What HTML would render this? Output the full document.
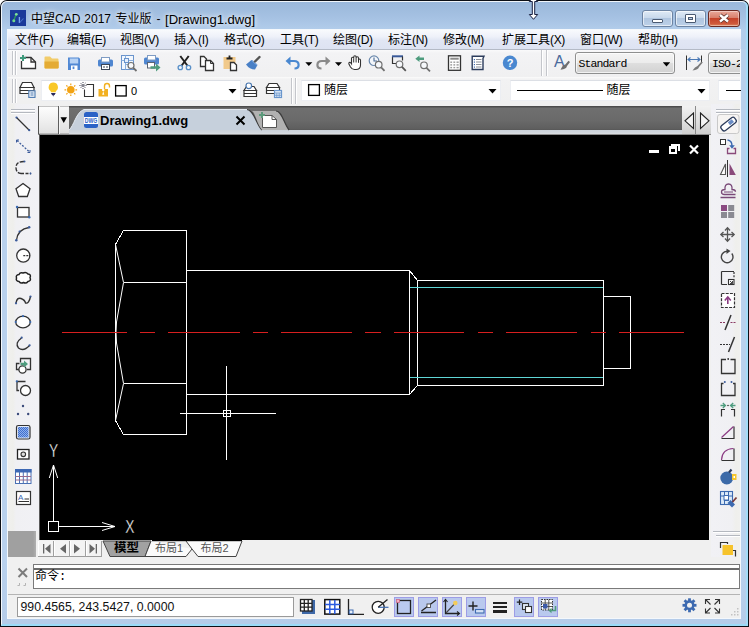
<!DOCTYPE html>
<html lang="zh-CN">
<head>
<meta charset="utf-8">
<title>中望CAD 2017 专业版 - [Drawing1.dwg]</title>
<style>
html,body{margin:0;padding:0;background:#fff;}
body{width:749px;height:627px;overflow:hidden;position:relative;font-family:"Liberation Sans","Noto Sans CJK SC",sans-serif;font-size:12px;color:#000;}
div,span{box-sizing:border-box;}
.a{position:absolute;}
#win{position:absolute;left:0;top:0;width:749px;height:627px;border-radius:7px 7px 0 0;background:#0c0f16;overflow:hidden;}
#frame{position:absolute;left:1px;top:1px;width:747px;height:625px;border-radius:6px 6px 0 0;background:linear-gradient(180deg,#9ab8db 0,#9fbcde 8px,#a6c2e3 17px,#b2cdeb 29px,#b9d1ed 100px,#b9d1ed 560px,#b5cce9 622px);}
#frame:before{content:"";position:absolute;left:0;top:0;right:0;bottom:0;border:1px solid rgba(255,255,255,.85);border-right:2px solid #a3dcf8;border-bottom:2px solid #9bdbf8;border-radius:6px 6px 0 0;}
#inner{left:7px;top:29px;width:734px;height:590px;background:#f4f8fc;}
#title span{position:absolute;top:11px;height:17px;line-height:17px;font-size:12px;white-space:nowrap;color:#000;text-shadow:0 0 7px rgba(255,255,255,.9),0 0 4px rgba(255,255,255,.7);}
#menubar{left:8px;top:30px;width:733px;height:19px;background:linear-gradient(180deg,#f8fafd 0,#eef1f9 35%,#e1e6f4 55%,#dde3f2 100%);}
#menubar span{position:absolute;top:0;height:19px;line-height:20px;font-size:12px;white-space:nowrap;}
#menubar b{font-weight:normal;letter-spacing:-0.35px;}
#tb1{left:8px;top:49px;width:732px;height:28px;background:linear-gradient(180deg,#fafafb 0,#f3f3f5 3px,#f0f0f1 100%);border-top:1px solid #b4bac6;}
#tb2{left:8px;top:77px;width:732px;height:29px;background:linear-gradient(180deg,#fbfbfb 0,#f2f2f3 2px,#f0f0f0 26px,#f0f0f0 27px,#fdfdfd 28px);}
#client{left:8px;top:104px;width:732px;height:514px;background:#f0f0f0;}
#leftbar{left:8px;top:104px;width:31px;height:427px;background:linear-gradient(90deg,#f0f0ee 0,#efefec 5px,#f0f0f3 8px,#f1f1f5 100%);}
#leftgray{left:8px;top:531px;width:28px;height:26px;background:#a0a0a0;}
#rightbar{left:711px;top:104px;width:29px;height:453px;background:linear-gradient(90deg,#f1f1f5 0,#f0f0f3 21px,#efefec 25px,#f0f0ee 100%);}
#tabbar{left:38px;top:106px;width:673px;height:28px;background:linear-gradient(180deg,#4c4c4c 0,#4c4c4c 1px,#6f6f6f 2px,#6a6a6a 14px,#5e5e5e 23px,#555 24px);}
#tabstrip{left:38px;top:130px;width:673px;height:5px;background:linear-gradient(180deg,#cbd2da 0,#d3d8de 3px,#dde0e4 4px,#8e8e8e 4px);}
#canvas{left:40px;top:135px;width:669px;height:405px;background:#000;}
#layouts{left:38px;top:540px;width:673px;height:17px;background:#f0f0f0;}
#cmd{left:8px;top:557px;width:732px;height:37px;background:#f0f0f0;}
#status{left:8px;top:594px;width:732px;height:24px;background:#f0f0f0;border-top:1px solid #b4b4b4;}
.combo{position:absolute;background:#fff;border:1px solid #eceef2;border-top-color:#dcdfe5;}
.btncombo{position:absolute;border:1px solid #8e8f8f;border-radius:3px;background:linear-gradient(180deg,#f4f4f4 0,#ececec 48%,#dedede 52%,#d2d2d2 100%);box-shadow:inset 0 0 0 1px rgba(255,255,255,.7);font-family:"Liberation Mono","Noto Sans CJK SC",monospace;font-size:11px;white-space:nowrap;overflow:hidden;}
.cjk{font-family:"Liberation Sans","Noto Sans CJK SC",sans-serif;}
</style>
</head>
<body>
<div id="win">
<div id="frame"></div>
<div id="inner" class="a"></div>
<div id="title"><span style="left:31px">中望CAD</span><span style="left:84.3px">2017</span><span style="left:115.5px">专业版</span><span style="left:156.5px">-</span><span style="left:165px;font-size:13.1px">[Drawing1.dwg]</span></div>
<div id="menubar" class="a">
<span style="left:7px">文件<b>(F)</b></span>
<span style="left:59px">编辑<b>(E)</b></span>
<span style="left:112px">视图<b>(V)</b></span>
<span style="left:166px">插入<b>(I)</b></span>
<span style="left:216px">格式<b>(O)</b></span>
<span style="left:272px">工具<b>(T)</b></span>
<span style="left:325px">绘图<b>(D)</b></span>
<span style="left:380px">标注<b>(N)</b></span>
<span style="left:435px">修改<b>(M)</b></span>
<span style="left:494px">扩展工具<b>(X)</b></span>
<span style="left:572px">窗口<b>(W)</b></span>
<span style="left:630px">帮助<b>(H)</b></span>
</div>
<div id="tb1" class="a"></div>
<div id="tb2" class="a"></div>
<div id="client" class="a"></div>
<div id="leftbar" class="a"></div>
<div id="leftgray" class="a"></div>
<div id="rightbar" class="a"></div>
<div id="tabbar" class="a"></div>
<div id="tabstrip" class="a"></div>
<div id="canvas" class="a"></div>
<div id="layouts" class="a"></div>
<div id="cmd" class="a"></div>
<div id="status" class="a"></div>
<!-- window buttons -->
<div class="a" style="left:642px;top:10px;width:31px;height:17px;border:1px solid #6d84a3;border-radius:3px;background:linear-gradient(180deg,#dfeaf6 0,#c9d9ec 45%,#b0c6e0 50%,#bcd0e8 100%);box-shadow:inset 0 0 0 1px rgba(255,255,255,.6);"></div>
<div class="a" style="left:675px;top:10px;width:31px;height:17px;border:1px solid #6d84a3;border-radius:3px;background:linear-gradient(180deg,#dfeaf6 0,#c9d9ec 45%,#b0c6e0 50%,#bcd0e8 100%);box-shadow:inset 0 0 0 1px rgba(255,255,255,.6);"></div>
<div class="a" style="left:708px;top:10px;width:32px;height:17px;border:1px solid #6b2a22;border-radius:3px;background:linear-gradient(180deg,#e9a99b 0,#d9806c 45%,#c5432a 50%,#cf5a3c 85%,#e08a60 100%);box-shadow:inset 0 0 0 1px rgba(255,255,255,.4);"></div>

<!-- layer combo -->
<div class="combo" style="left:41px;top:80px;width:200px;height:21px;"></div>
<div class="a" style="left:131px;top:84px;height:15px;line-height:15px;font-size:11px;">0</div>
<!-- color combo -->
<div class="combo" style="left:301px;top:80px;width:200px;height:21px;"></div>
<div class="a" style="left:324px;top:82px;height:16px;line-height:16px;font-size:12px;">随层</div>
<!-- linetype combo -->
<div class="combo" style="left:510px;top:80px;width:200px;height:21px;"></div>
<div class="a" style="left:606.5px;top:82px;height:16px;line-height:16px;font-size:12px;">随层</div>
<!-- lineweight combo (clipped) -->
<div class="combo" style="left:718px;top:80px;width:40px;height:21px;"></div>

<!-- text style / dim style combos -->
<div class="btncombo" style="left:575px;top:52px;width:100px;height:22px;line-height:22px;padding-left:2.500px;font-size:11.500px;letter-spacing:-0.900px;">Standard</div>
<div class="btncombo" style="left:708px;top:52px;width:60px;height:22px;line-height:22px;padding-left:3px;font-size:11.500px;letter-spacing:-0.900px;">ISO-25</div>

<div class="a" style="left:740px;top:49px;width:1px;height:60px;background:#f4f8fc"></div><div class="a" style="left:741px;top:49px;width:5px;height:60px;background:#b8d0ec"></div><div class="a" style="left:746px;top:49px;width:2px;height:60px;background:#a3dcf8"></div><div class="a" style="left:748px;top:49px;width:1px;height:60px;background:#0c0f16"></div>
<!-- doc tab bar widgets -->
<div class="a" style="left:38px;top:106px;width:21px;height:28px;background:linear-gradient(180deg,#8a8a8a 0,#fdfdfd 1px,#f0f0f0 50%,#e2e2e2 96%,#9a9a9a 100%);border-right:1px solid #5e5e5e;border-left:1px solid #555;"></div>
<div class="a" style="left:59px;top:106px;width:10px;height:28px;background:linear-gradient(180deg,#8a8a8a 0,#f8f8f8 1px,#ececec 50%,#e0e0e0 96%,#9a9a9a 100%);border-left:1px solid #f4f4f4;"></div>
<div class="a" style="left:682px;top:106px;width:14px;height:28px;background:linear-gradient(180deg,#f2f2f2 0,#dedede 60%,#cfcfcf 100%);border-right:1px solid #8a8a8a;"></div>
<div class="a" style="left:696px;top:106px;width:15px;height:28px;background:linear-gradient(180deg,#f2f2f2 0,#dedede 60%,#cfcfcf 100%);"></div>
<div class="a" style="left:100px;top:112px;height:17px;line-height:17px;font-size:13px;font-weight:bold;white-space:nowrap;z-index:5;">Drawing1.dwg</div>

<!-- layout tabs text -->
<div class="a" style="left:114px;top:541px;height:15px;line-height:15px;font-size:12.5px;font-weight:bold;z-index:5;">模型</div>
<div class="a" style="left:155px;top:541px;height:15px;line-height:15px;font-size:11px;color:#555;z-index:5;white-space:nowrap;">布局1</div>
<div class="a" style="left:200.5px;top:541px;height:15px;line-height:15px;font-size:11px;color:#555;z-index:5;white-space:nowrap;">布局2</div>

<!-- command line -->
<div class="a" style="left:33px;top:564px;width:707px;height:25px;background:#fff;border:1px solid #7a7a7a;"></div>
<div class="a" style="left:34px;top:568px;width:705px;height:2px;background:#6b6b6b;"></div>
<div class="a" style="left:35px;top:570px;height:14px;line-height:14px;font-size:12px;white-space:nowrap;font-family:'Liberation Mono','Noto Sans CJK SC',monospace;">命令:</div>

<!-- status coords -->
<div class="a" style="left:17px;top:597px;width:277px;height:20px;background:#fff;border:1px solid #9a9a9a;"></div>
<div class="a" style="left:20.5px;top:598px;height:18px;line-height:18px;font-size:12.3px;white-space:nowrap;color:#111;">990.4565, 243.5427, 0.0000</div>
<div class="a" style="left:39px;top:134px;width:1px;height:406px;background:#5a5a5a"></div>
<div class="a" style="left:33px;top:531px;width:3px;height:26px;background:linear-gradient(90deg,#a0a0a0,#b0b0b0)"></div>
<svg class="a" style="left:0;top:0;z-index:4" width="749" height="627" viewBox="0 0 749 627" fill="none" stroke-linecap="butt">
<!-- CAD drawing -->
<g stroke="#fff" stroke-width="1" shape-rendering="crispEdges" fill="none">
<path d="M123.5 230.5H186.5V434.5H123.5L115.5 420.5V244.5Z"/>
<path d="M123.5 282.5H186.5M123.5 383.5H186.5"/>
<path d="M186.5 270.5H409.5V394.5H186.5"/>
<path d="M409.5 270.5L417.5 280.5M409.5 394.5L417.5 385.5"/>
<path d="M417.5 280.5H603.5V385.5H417.5Z"/>
<path d="M603.5 296.5H630.5V368.5H603.5"/>
</g>
<g stroke="#fff" stroke-width="1" fill="none">
<path d="M115.5 244.5L123.5 282.5L116.5 322 116 332 116.5 343 123.5 383.5 115.5 420.5"/>
</g>
<g stroke="#5fd6d6" stroke-width="1" shape-rendering="crispEdges">
<path d="M410 287.5H603M410 377.5H603"/>
</g>
<g stroke="#d61f1f" stroke-width="1" shape-rendering="crispEdges">
<path d="M62 332.5H126.5M139.5 332.5H154.5M167.5 332.5H239.5M252.5 332.5H267.5M280.5 332.5H351.5M365 332.5H380.5M393.5 332.5H464M477.5 332.5H493M506 332.5H577M590.5 332.5H606M619 332.5H684"/>
</g>
<!-- crosshair -->
<g stroke="#fff" stroke-width="1" shape-rendering="crispEdges">
<path d="M226.5 366V460M180 413.5H276M223.5 410.5H230.5V416.5H223.5Z"/>
</g>
<!-- UCS icon -->
<g stroke="#fff" stroke-width="1" shape-rendering="crispEdges"><path d="M48.5 521.5H58.5V531.5H48.5ZM53.5 521V465M58.5 526.5H115"/></g>
<g stroke="#fff" stroke-width="1"><path d="M49.3 478L53.5 465L57.7 478M102 522.5L115 526.5L102 530.5"/>
</g>
<g fill="#fff" stroke="#000" stroke-width="0.350" opacity="0.990" font-family="Liberation Sans, sans-serif" font-size="17.500">
<text x="53.500" y="456.800" text-anchor="middle" textLength="9.200" lengthAdjust="spacingAndGlyphs">Y</text>
<text x="129.800" y="532.800" text-anchor="middle" textLength="9.200" lengthAdjust="spacingAndGlyphs">X</text>
</g>
<!-- MDI child buttons -->
<g fill="#fff" stroke="none" shape-rendering="crispEdges">
<rect x="649" y="150" width="10" height="3"/>
<path d="M671 144H680V151H678V146H671Z"/>
<path fill-rule="evenodd" d="M669 146H677V154H669ZM671 149H675V152H671Z"/>
</g>
<g stroke="#fff" stroke-width="2.2"><path d="M690 145.5L698 153.5M698 145.5L690 153.5"/></g>
<!-- document tab -->
<path d="M69 130C74 126 76 112 84 109.5H247C254 110 256 124 262 130Z" fill="#c6d0dc" stroke="none"/>
<path d="M69 130C74 126 76 112 84 109.5H247" stroke="#e4eaf1" stroke-width="1"/>
<path d="M247 109.5C254 110 256 124 262 130" stroke="#3c3c3c" stroke-width="1.2"/>
<!-- new tab mini -->
<path d="M252 111C254 111 257 111 260 111H276C282 111 284 124 289 130H262C257 124 255 112 252 111Z" fill="#b1b1b1"/>
<path d="M276 111C282 111 284 124 289 130" stroke="#3c3c3c" stroke-width="1.2"/>
<path d="M262.5 115.5H272L276.5 119.5V127.5H262.5Z" fill="#fff" stroke="#555" stroke-width="1"/>
<path d="M272 115.5V119.5H276.5" stroke="#555" stroke-width="1"/>
<path d="M262 112V118M259 115H265" stroke="#5c9a7c" stroke-width="2"/>
<!-- dropdown arrow -->
<path d="M60.500 117.300H67L63.750 123Z" fill="#000"/>
<!-- tab close X -->
<path d="M236.5 116.5L244.5 124.5M244.5 116.5L236.5 124.5" stroke="#000" stroke-width="2"/>
<!-- DWG icon -->
<rect x="84" y="112" width="14" height="16" rx="2.5" fill="#2a62c6"/>
<rect x="84" y="117" width="14" height="7" fill="#fff"/>
<text x="91" y="123.300" font-family="Liberation Sans, sans-serif" font-size="7" font-weight="bold" fill="#2a62c6" text-anchor="middle" stroke="none" textLength="12.500" lengthAdjust="spacingAndGlyphs">DWG</text>
<!-- tab nav arrows -->
<path d="M693.500 113V128.500L685 120.800Z" stroke="#222" stroke-width="1.100" fill="#f4f4f4"/>
<path d="M700.500 113V128.500L709 120.800Z" stroke="#222" stroke-width="1.100" fill="#f4f4f4"/>
<!-- layout nav -->
<g shape-rendering="crispEdges">
<rect x="38" y="541" width="64" height="15" fill="#f3f3f3" stroke="none"/>
<path d="M38 556.500H102" stroke="#9c9c9c"/>
<path d="M53.500 541V557M69.500 541V557M85.500 541V557M101.500 541V557" stroke="#a0a0a0"/>
<path d="M54.500 541V556M70.500 541V556M86.500 541V556M38.500 541V556" stroke="#fff"/>
</g>
<g fill="#666" stroke="none">
<rect x="43" y="544" width="1.300" height="9.500"/><path d="M50.500 544V553.500L45 548.800Z"/>
<path d="M66 544V553.500L60 548.800Z"/>
<path d="M74 544V553.500L80 548.800Z"/>
<path d="M89.500 544V553.500L95 548.800Z"/><rect x="95.700" y="544" width="1.300" height="9.500"/>
</g>
<!-- layout tabs -->
<path d="M103 541H151L145 556.5H110Z" fill="#a2a2a2" stroke="#444" stroke-width="1"/>
<path d="M151 541L145 556.5H186L192 549" stroke="#444" stroke-width="1" fill="#fbfbfb"/>
<path d="M186 541L192 549L198 556.5H236L242 541" stroke="#444" stroke-width="1" fill="#fbfbfb"/>
<rect x="152" y="540" width="90" height="1.2" fill="#000"/>
<!-- toolbar grips -->
<g shape-rendering="crispEdges" stroke="none">
<rect x="12" y="51" width="1" height="24" fill="#c4c6cb"/><rect x="13" y="51" width="1" height="24" fill="#fff"/>
<rect x="15" y="51" width="1" height="24" fill="#c4c6cb"/><rect x="16" y="51" width="1" height="24" fill="#fff"/>
<rect x="12" y="79" width="1" height="24" fill="#c4c6cb"/><rect x="13" y="79" width="1" height="24" fill="#fff"/>
<rect x="15" y="79" width="1" height="24" fill="#c4c6cb"/><rect x="16" y="79" width="1" height="24" fill="#fff"/>
<rect x="541" y="50" width="1" height="26" fill="#c4c6cb"/><rect x="542" y="50" width="1" height="26" fill="#fff"/>
<rect x="546" y="50" width="1" height="26" fill="#c4c6cb"/><rect x="547" y="50" width="1" height="26" fill="#fff"/>
<rect x="291" y="78" width="1" height="26" fill="#c4c6cb"/><rect x="292" y="78" width="1" height="26" fill="#fff"/>
<rect x="295" y="78" width="1" height="26" fill="#c4c6cb"/><rect x="296" y="78" width="1" height="26" fill="#fff"/>
</g>
<!-- title icon -->
<rect x="10" y="10" width="16" height="16" fill="#1b3a9a"/>
<path d="M13.700 20.800L16.200 14.200" stroke="#2f9a5a" stroke-width="1.300"/>
<circle cx="13.800" cy="20.700" r="1.500" fill="#6fd88a"/><circle cx="16.300" cy="14.300" r="1.400" fill="#7fe09a"/>
<path d="M19.400 17V23" stroke="#7aa8f0" stroke-width="1.300"/>
<path d="M19.800 22.500L23.500 18.500" stroke="#4a72c8" stroke-width="1.100"/>
<!-- new -->
<path d="M24.5 57.5H31L35.5 62V68.5H21.5V61" fill="#fff" stroke="#333" stroke-width="1.3"/>
<path d="M31 57.5V62H35.5" stroke="#333" stroke-width="1.3"/>
<path d="M23 55V61M20 58H26" stroke="#3f9a7c" stroke-width="2"/>
<!-- open -->
<path d="M44.5 57.5Q44.5 56.5 45.5 56.5H50L52 58.5H57.5Q58.5 58.5 58.5 59.5V67.500Q58.5 68.5 57.5 68.500H45.5Q44.5 68.5 44.5 67.5Z" fill="#f2cc6a"/>
<path d="M44.5 61.5H58.7V67.5Q58.7 68.5 57.700 68.500H45.500Q44.500 68.500 44.500 67.500Z" fill="#e4ab34"/>
<!-- save -->
<path d="M68 57.500H78.800L80 58.700V70H68Z" fill="#5088d4"/>
<rect x="69.800" y="58.500" width="8.400" height="5" fill="#b7d2f4"/>
<rect x="71" y="65.500" width="6.500" height="4.500" fill="#fff"/>
<rect x="72.600" y="66.500" width="1.800" height="2.600" fill="#5088d4"/>
<!-- print -->
<rect x="98" y="59.500" width="15" height="7" rx="1.500" fill="#4f86d0"/>
<rect x="101.500" y="57.500" width="8" height="4.500" fill="#fff" stroke="#7f9cc4" stroke-width="1"/>
<rect x="101.500" y="64.500" width="8" height="5" fill="#fff" stroke="#3b4657" stroke-width="1"/>
<rect x="103" y="66.500" width="2" height="1" fill="#3b4657"/><rect x="106" y="66.500" width="2" height="1" fill="#3b4657"/>
<!-- preview -->
<rect x="121.500" y="55.500" width="12" height="14" fill="#f3f8fe" stroke="#6a94cc" stroke-width="1"/>
<path d="M121.500 60.500H133.500M125.500 55.500V69.500M125.500 64.500H129" stroke="#8ab0de" stroke-width="1"/>
<rect x="124.500" y="58.500" width="4" height="4" fill="#e6f0fc" stroke="#6a94cc"/>
<circle cx="131" cy="65.500" r="3" fill="#f8fafd" stroke="#6e6e6e" stroke-width="1.200"/>
<path d="M133.300 67.800L136.500 71" stroke="#6e6e6e" stroke-width="1.800"/>
<!-- publish -->
<rect x="144" y="57.500" width="15" height="7" rx="1.500" fill="#4f86d0"/>
<rect x="147.500" y="55.500" width="8" height="4.500" fill="#fff" stroke="#7f9cc4" stroke-width="1"/>
<rect x="147.500" y="62.500" width="7" height="5.500" fill="#fff" stroke="#5a6474" stroke-width="1"/>
<path d="M150.500 66.300H156V63.500L160.500 67.500L156 71.500V68.700H150.500Z" fill="#4e9c7e"/>
<!-- cut -->
<path d="M180.300 56L187.300 65.500M188.700 56L181.700 65.500" stroke="#222" stroke-width="2"/>
<circle cx="180.300" cy="67.500" r="2.200" stroke="#5a90c8" stroke-width="1.300" fill="#eef4fb"/>
<circle cx="188.500" cy="67.500" r="2.200" stroke="#5a90c8" stroke-width="1.300" fill="#eef4fb"/>
<!-- copy -->
<path d="M200.500 56.500H204L206.500 59V66.500H200.500Z" fill="#fff" stroke="#333" stroke-width="1.300"/>
<path d="M205.500 60.500H210.500L213.500 63.500V70.500H205.500Z" fill="#fff" stroke="#333" stroke-width="1.300"/>
<path d="M210.500 60.500V63.500H213.500" stroke="#333" stroke-width="1"/>
<!-- paste -->
<rect x="223.500" y="57" width="12" height="12" fill="#f1c98a"/>
<path d="M226.500 58.500H232.500M229.500 55.500V58" stroke="#222" stroke-width="1.800"/>
<path d="M230.500 62.500H234L236.500 65V70.500H230.500Z" fill="#fff" stroke="#333" stroke-width="1.300"/>
<!-- match -->
<path d="M246 64.500L251.500 60L257.500 65L255 69.500Q249.500 69.500 246 64.500Z" fill="#4a80c6"/>
<path d="M252 60.500L257 65" stroke="#7aa4da" stroke-width="1.200"/>
<path d="M255 61.500L259.500 57" stroke="#555" stroke-width="2.400" stroke-linecap="round"/>
<!-- undo -->
<path d="M288 61H294Q298.600 61 298.600 65Q298.600 68.500 294.500 68.500" stroke="#4a88d0" stroke-width="2.200"/>
<path d="M285.500 61L290.500 56.500V65.500Z" fill="#4a88d0"/>
<path d="M305.300 62.300H312.300L308.800 66Z" fill="#000"/>
<!-- redo -->
<path d="M328 61H322Q317.400 61 317.400 65Q317.400 68.500 321.500 68.500" stroke="#8a8a8a" stroke-width="2.200"/>
<path d="M330.500 61L325.500 56.500V65.500Z" fill="#8a8a8a"/>
<path d="M335 62.300H342L338.500 66Z" fill="#000"/>
<!-- pan hand -->
<path d="M351.500 63V58.500Q351.500 57.300 352.600 57.300Q353.700 57.300 353.700 58.500V57Q353.700 55.700 354.900 55.700Q356.100 55.700 356.100 57V58Q356.100 56.800 357.300 56.800Q358.500 56.800 358.500 58V60Q358.500 59 359.500 59Q360.500 59 360.500 60.200V65Q360.500 69.500 356 69.500H354.500Q352 69.500 350.500 67L348.800 63.800Q348.600 62.600 349.600 62.400Q350.600 62.300 351.500 63.800Z" fill="#fff" stroke="#333" stroke-width="1.100"/>
<path d="M353.700 58.500V62.500M356.100 58V62.500M358.500 60V62.800" stroke="#333" stroke-width="1"/>
<!-- zoom rt -->
<circle cx="374" cy="60.700" r="4.800" stroke="#6a88ac" stroke-width="1.200" fill="#f3f6fa"/>
<path d="M374 57.500V61H377" stroke="#4a6a94" stroke-width="1.100"/>
<circle cx="378.700" cy="64.700" r="3.300" fill="#f6f8fb" stroke="#707070" stroke-width="1.200"/>
<path d="M381.200 67.300L384.500 70.800" stroke="#707070" stroke-width="1.800"/>
<!-- zoom window -->
<path d="M392.500 56.500V63.500H396" stroke="#333" stroke-width="1.200"/>
<path d="M392 56.300H403" stroke="#3a5a9a" stroke-width="2"/>
<path d="M402.500 56.500V60.500" stroke="#333" stroke-width="1.200"/>
<circle cx="399.500" cy="64.300" r="3.300" fill="#f6f8fb" stroke="#707070" stroke-width="1.200"/>
<path d="M402 66.900L405.800 70.800" stroke="#555" stroke-width="1.800"/>
<!-- zoom prev -->
<path d="M415.300 58.700L419.500 55.500V57.500H424V60H419.500V62Z" fill="#4e9c7e"/>
<circle cx="424" cy="65.300" r="3.300" fill="#f6f8fb" stroke="#707070" stroke-width="1.200"/>
<path d="M426.500 67.900L430 71.300" stroke="#707070" stroke-width="1.800"/>
<!-- calc -->
<rect x="448.500" y="55.800" width="12" height="14.500" fill="#fff" stroke="#333" stroke-width="1.300"/>
<rect x="450.300" y="57.700" width="8.400" height="2" fill="#8a8a8a"/>
<g fill="#9a9a9a"><rect x="450.300" y="61.500" width="1.800" height="1.400"/><rect x="453.400" y="61.500" width="1.800" height="1.400"/><rect x="456.500" y="61.500" width="2.200" height="1.400"/>
<rect x="450.300" y="64.200" width="1.800" height="1.400"/><rect x="453.400" y="64.200" width="1.800" height="1.400"/><rect x="456.500" y="64.200" width="2.200" height="1.400"/>
<rect x="450.300" y="66.900" width="1.800" height="1.400"/><rect x="453.400" y="66.900" width="1.800" height="1.400"/><rect x="456.500" y="66.900" width="2.200" height="1.400"/></g>
<!-- properties -->
<path d="M472.200 56.200H484L483 58.500V69.500H472.200Z" fill="#fff" stroke="#2c3c5c" stroke-width="1.400"/>
<g stroke="#8a8f98" stroke-width="1"><path d="M476 59.500H481.500M476 62H481.500M476 64.500H481.500M476 67H481.500"/></g>
<g fill="#3d6ab0"><rect x="473.800" y="59" width="1.200" height="1.200"/><rect x="473.800" y="61.500" width="1.200" height="1.200"/><rect x="473.800" y="64" width="1.200" height="1.200"/><rect x="473.800" y="66.500" width="1.200" height="1.200"/></g>
<!-- help -->
<circle cx="510" cy="62.800" r="7.200" fill="#4a88d0"/>
<text x="510" y="67" font-family="Liberation Sans, sans-serif" font-size="11" font-weight="bold" fill="#fff" stroke="none" text-anchor="middle">?</text>
<!-- text style A -->
<text x="554" y="67" font-family="Liberation Sans, sans-serif" font-size="16" fill="#4a6a9c" stroke="none">A</text>
<path d="M560.500 69.800Q562.500 65 565.300 64.500L568.500 60.800L570 62L567 66Q566.500 69.300 560.500 69.800Z" fill="#6e6e6e"/>
<path d="M662.800 62.300H670.200L666.500 66.500Z" fill="#000"/>
<!-- dim style -->
<path d="M686.500 55.500V70M701.500 55.500V62" stroke="#333" stroke-width="1"/>
<path d="M688 59.500H700" stroke="#4a78b4" stroke-width="1.200"/>
<path d="M690.500 57.500L688 59.500L690.500 61.500M697.500 57.500L700 59.500L697.500 61.500" stroke="#4a78b4" stroke-width="1.100"/>
<path d="M692.500 70.500Q695 66.500 697.500 66L701.500 61.500L702.800 62.500L699 67Q698.500 69.500 692.500 70.500Z" fill="#7a7a7a"/>
<!-- layers icon -->
<g stroke="#333" stroke-width="1.200" fill="#fff">
<path d="M22.500 82.500H31.500L34 87.500H20Z"/>
<path d="M20 87.500H34V90.500H20ZM20 90.500H34V93.500H20Z" />
</g>
<rect x="28.800" y="90.800" width="6.200" height="6.600" fill="#f0f5fb" stroke="#4a78b0" stroke-width="1.100"/>
<path d="M30.500 93H33.500M30.500 95H33.500" stroke="#4a78b0" stroke-width="1"/>
<!-- bulb -->
<path d="M53.300 82.500A4.700 4.700 0 0 1 56 91L55.700 92.300H50.900L50.600 91A4.700 4.700 0 0 1 53.300 82.500Z" fill="#f9c828"/>
<path d="M50.900 93H55.700L54.600 95H52ZM52.300 95.300H54.300L53.300 96.500Z" fill="#2a2a5c"/>
<!-- sun -->
<circle cx="70.800" cy="89.800" r="3.800" fill="#f2a313"/>
<g stroke="#f2a313" stroke-width="1.200"><path d="M70.800 83.500V85.200M70.800 94.400V96.100M64.500 89.800H66.200M75.400 89.800H77.100M66.300 85.300L67.500 86.500M74.100 93.100L75.300 94.300M75.300 85.300L74.100 86.500M67.500 93.100L66.300 94.300"/></g>
<!-- freeze vp -->
<path d="M86.500 84.500H93.500V96.500H84.500V89.500" stroke="#333" stroke-width="1.100" fill="#fff"/>
<g stroke="#445" stroke-width="1" stroke-dasharray="1 1"><path d="M83 82V89M79.500 85.500H86.500M80.500 83L85.500 88M85.500 83L80.500 88"/></g>
<!-- lock -->
<rect x="98.500" y="89" width="9.500" height="7.500" fill="#f2b020"/>
<path d="M104.500 89V86Q104.500 83.500 107 83.500Q109.500 83.500 109.500 86V87.500" stroke="#f2b020" stroke-width="1.400"/>
<path d="M103.200 91.300a1.300 1.300 0 1 1 0.100 0L104.300 94.800H102.200Z" fill="#fff"/>
<!-- color squares -->
<rect x="115.600" y="85.600" width="10.600" height="10.400" fill="#fff" stroke="#000" stroke-width="1.300"/>
<rect x="308.600" y="84.600" width="10.800" height="10.800" fill="#fff" stroke="#000" stroke-width="1.300"/>
<!-- combo arrows -->
<path d="M228.500 89H236.500L232.500 93.500Z" fill="#000"/>
<path d="M488.500 89H496.500L492.500 93.500Z" fill="#000"/>
<path d="M697.500 89H705.500L701.500 93.500Z" fill="#000"/>
<!-- linetype sample -->
<path d="M517 90.500H603M726 90.500H741" stroke="#000" stroke-width="1" shape-rendering="crispEdges"/>
<!-- layer prev -->
<g stroke="#333" stroke-width="1.200" fill="#fff">
<path d="M246.500 86.500H254L256.500 90.500H244Z"/>
<path d="M244 90.500H256.500V93.500H244ZM244 93.500H256.500V96.500H244Z"/>
</g>
<circle cx="248.800" cy="85.800" r="2.800" fill="#fff" stroke="#4a78b0" stroke-width="1.200"/>
<!-- layer state -->
<g stroke="#333" stroke-width="1.200" fill="#fff">
<path d="M269 83.500H277L279.500 87.500H266.500Z"/>
<path d="M266.500 87.500H279.500V90.500H266.500ZM266.500 90.500H279.500V93.500H266.500Z"/>
</g>
<rect x="274.500" y="90.500" width="7" height="7" fill="#e3edf9" stroke="#6a96cc" stroke-width="1.200"/>
<path d="M274.500 93H281.500M276.800 93V97.500M279.200 93V97.500M274.500 95.300H281.500" stroke="#6a96cc" stroke-width="0.800"/>
<!-- left toolbar grip -->
<g shape-rendering="crispEdges" stroke="none">
<rect x="11" y="109" width="24" height="1" fill="#b4b8bf"/><rect x="11" y="110" width="24" height="1" fill="#fff"/>
<rect x="11" y="112" width="24" height="1" fill="#b4b8bf"/><rect x="11" y="113" width="24" height="1" fill="#fff"/>
</g>
<!-- line -->
<path d="M16.500 117.500L29 130" stroke="#333" stroke-width="1.300"/>
<circle cx="16.500" cy="117.500" r="1.100" fill="#3a5a9a"/><circle cx="29.200" cy="130.200" r="1.100" fill="#3a5a9a"/>
<!-- xline -->
<path d="M17 140.500L29.500 152" stroke="#3a5a9a" stroke-width="1.300" stroke-dasharray="2 1.500"/>
<path d="M16.500 142.500V140H19M27.500 152.500H30V150" stroke="#3a5a9a" stroke-width="1"/>
<!-- polyline -->
<path d="M24 161.500Q16 161.500 16 167.500Q16 173 21 173.500" stroke="#333" stroke-width="1.400" stroke-dasharray="4 1.500"/>
<path d="M21 173.500H31" stroke="#333" stroke-width="1.400" stroke-dasharray="3 1.500"/>
<circle cx="24.500" cy="161.500" r="1" fill="#3a5a9a"/><circle cx="30.500" cy="173.500" r="1" fill="#3a5a9a"/>
<!-- polygon -->
<path d="M23 183.500L30 188.800L27.300 196.500H18.700L16 188.800Z" stroke="#333" stroke-width="1.300" fill="#fff"/>
<!-- rectangle -->
<rect x="17.500" y="207.500" width="11.500" height="9.500" stroke="#333" stroke-width="1.300" fill="#fff"/>
<circle cx="17" cy="207" r="1.200" fill="#3a6ab0"/><circle cx="29.300" cy="217.300" r="1.200" fill="#3a6ab0"/>
<!-- arc -->
<path d="M16.500 240Q18 229 29 227.500" stroke="#333" stroke-width="1.300"/>
<circle cx="16.300" cy="240.300" r="1.200" fill="#3a5a9a"/><circle cx="29.200" cy="227.300" r="1.200" fill="#3a5a9a"/><circle cx="19.500" cy="231.500" r="1" fill="#3a5a9a"/>
<!-- circle -->
<circle cx="23.300" cy="255.600" r="6.600" stroke="#333" stroke-width="1.300" fill="#fff"/>
<path d="M23.300 255.600H30" stroke="#333" stroke-width="1.200" stroke-dasharray="2 1"/>
<!-- revcloud -->
<path d="M19 281.500Q15.500 281 16.500 278Q15.500 275 19 274.500Q20 272 23 273Q26 271.500 28 274Q31.500 274.500 30 277.500Q31.500 281 28 281.500Q26 284 23.500 282.500Q21 284 19 281.500Z" stroke="#222" stroke-width="1.500" fill="#fff"/>
<!-- spline -->
<path d="M16 303Q17 297 21 298.500Q25 300 25.500 303Q29 304 30.500 296.500" stroke="#333" stroke-width="1.400"/>
<circle cx="16" cy="303.300" r="1.100" fill="#3a5a9a"/><circle cx="30.500" cy="296.500" r="1.100" fill="#3a5a9a"/>
<!-- ellipse -->
<ellipse cx="23" cy="322" rx="7.300" ry="5.800" stroke="#333" stroke-width="1.300" fill="#fff"/>
<circle cx="15.700" cy="322" r="1.100" fill="#3a6ab0"/><circle cx="30.300" cy="322" r="1.100" fill="#3a6ab0"/><circle cx="23" cy="316.200" r="1.100" fill="#3a6ab0"/>
<!-- ellipse arc -->
<path d="M21.500 338Q14.500 343 18.500 348Q23.500 352 29.500 345.500" stroke="#333" stroke-width="1.300"/>
<circle cx="21.700" cy="337.700" r="1.100" fill="#3a5a9a"/><circle cx="29.600" cy="345.300" r="1.100" fill="#3a5a9a"/>
<!-- insert block -->
<path d="M20.500 362.500V358.500H30.500V369.500H27" stroke="#333" stroke-width="1.300"/>
<path d="M19.500 363.500H16.500V369.500H19" stroke="#333" stroke-width="1.300"/>
<circle cx="22.500" cy="369.500" r="3.600" stroke="#333" stroke-width="1.300" fill="#fff"/>
<path d="M20.500 362.800H24V360.500L28 364L24 367.500V365.200H20.500Z" fill="#4e9c7e"/>
<!-- make block -->
<path d="M17 388V381.500H25.500M17 388" stroke="#333" stroke-width="1.300"/>
<path d="M17 388V390.500H19" stroke="#333" stroke-width="1.300"/>
<circle cx="16.800" cy="381.300" r="1.100" fill="#3a6ab0"/>
<circle cx="25.500" cy="390.500" r="5" stroke="#333" stroke-width="1.300" fill="#fff"/>
<!-- point -->
<circle cx="23" cy="406" r="1.200" fill="#3a4a7a"/><circle cx="18" cy="414" r="1.200" fill="#3a4a7a"/><circle cx="28.200" cy="414" r="1.200" fill="#3a4a7a"/>
<!-- hatch -->
<defs><pattern id="hp" width="2" height="2" patternUnits="userSpaceOnUse"><rect width="2" height="2" fill="#8fb0ea"/><rect width="1" height="1" fill="#3f6fd0"/><rect x="1" y="1" width="1" height="1" fill="#3f6fd0"/></pattern></defs>
<rect x="16.500" y="425.500" width="13.500" height="13.500" rx="1.800" fill="#e8eef8" stroke="#333" stroke-width="1.200"/>
<rect x="18" y="427" width="10.500" height="10.500" fill="url(#hp)"/>
<!-- region -->
<rect x="17.500" y="449.500" width="11.500" height="9.500" stroke="#222" stroke-width="1.300" fill="#fff"/>
<circle cx="23.300" cy="454.300" r="2.300" stroke="#333" stroke-width="1.100" fill="#ddd"/>
<!-- table -->
<rect x="15.500" y="469.500" width="15.500" height="14" fill="#fff" stroke="#4a70b4" stroke-width="1"/>
<rect x="15" y="469" width="16.500" height="3.500" fill="#3d68b4"/>
<path d="M19.500 472V483.500M23.300 472V483.500M27.200 472V483.500" stroke="#4a70b4" stroke-width="1"/>
<path d="M15.500 476.500H31M15.500 480H31" stroke="#9a6a8a" stroke-width="1"/>
<!-- mtext -->
<rect x="16.500" y="491.500" width="14" height="13" stroke="#333" stroke-width="1.200" fill="#fff"/>
<text x="18" y="499.500" font-family="Liberation Sans, sans-serif" font-size="8" fill="#3d68b4" stroke="none">A</text>
<path d="M24.500 499H29M18.500 501.500H29" stroke="#333" stroke-width="1.100"/>
<!-- right toolbar grip -->
<g shape-rendering="crispEdges" stroke="none">
<rect x="716" y="109" width="24" height="1" fill="#b4b8bf"/><rect x="716" y="110" width="24" height="1" fill="#fff"/>
<rect x="716" y="112" width="24" height="1" fill="#b4b8bf"/><rect x="716" y="113" width="24" height="1" fill="#fff"/>
<rect x="713" y="531" width="27" height="1" fill="#b4b8bf"/><rect x="713" y="532" width="27" height="1" fill="#fff"/>
<rect x="716" y="535" width="24" height="1" fill="#b4b8bf"/><rect x="716" y="536" width="24" height="1" fill="#fff"/>
</g>
<!-- erase (pressed button) -->
<rect x="717.500" y="114.500" width="21.500" height="19" rx="2.500" fill="#f6f4f2" stroke="#c9c9c9" stroke-width="1"/>
<g transform="rotate(-38 728.5 124)">
<rect x="720" y="121" width="17" height="6.200" rx="2.200" fill="#fff" stroke="#2c3c5c" stroke-width="1.300"/>
<rect x="729" y="122.300" width="5" height="3.600" fill="#6a8cc4"/>
</g>
<!-- copy -->
<rect x="720.500" y="139.500" width="5" height="5" fill="#fff" stroke="#333" stroke-width="1"/>
<path d="M727.500 140Q732 140.500 732 146" stroke="#3d6ab0" stroke-width="1.500"/>
<path d="M729.200 145.300L732 148.800L734.800 145.300Z" fill="#3d6ab0"/>
<path d="M729.500 148.500H727.500V153.500H735.500V148.500H733.500" stroke="#8a4a7a" stroke-width="1.300"/>
<!-- mirror -->
<path d="M727.500 160V177" stroke="#333" stroke-width="1"/>
<path d="M725.500 164V174.500H720.500Z" stroke="#555" stroke-width="1.100" fill="#fff"/>
<path d="M729.500 163.500V175H735.800Z" fill="#8a4a7a"/>
<!-- offset -->
<path d="M720.500 197.500H735.500M735.500 194.500H724.500Q721.500 194.500 721.500 192Q721.500 189.500 725 189.500Q724.500 184 728.500 184Q732.500 184 732 189.500Q735.500 189.500 735.500 191.800" stroke="#7a4a78" stroke-width="1.300"/>
<path d="M724 192H733" stroke="#7a4a78" stroke-width="1"/>
<!-- array -->
<rect x="721" y="205" width="6" height="6" fill="#8a4a82"/><rect x="728.200" y="205" width="6" height="6" fill="#8a8a92"/>
<rect x="721" y="212" width="6" height="6" fill="#8a8a92"/><rect x="728.200" y="212" width="6" height="6" fill="#8a8a92"/>
<!-- move -->
<g stroke="#555" stroke-width="1.300"><path d="M727.500 228V241M721 234.500H734"/>
<path d="M725 230.500L727.500 227.800L730 230.500M725 238.500L727.500 241.200L730 238.500M723.500 232L720.800 234.500L723.500 237M731.500 232L734.200 234.500L731.500 237"/></g>
<!-- rotate -->
<path d="M731.800 253.500A5.800 5.800 0 1 1 727 251.200" stroke="#444" stroke-width="1.400"/>
<path d="M726.500 248.500L730.500 251L726.500 254Z" fill="#444"/>
<!-- scale -->
<path d="M721.500 271.500H734M721.500 271.500V284.500M721.500 284.500H727" stroke="#333" stroke-width="1.200"/>
<path d="M734 272V278" stroke="#333" stroke-width="1.200" stroke-dasharray="2 1.200"/>
<rect x="728.500" y="279.500" width="5.500" height="5" stroke="#333" stroke-width="1.100" fill="#fff"/>
<path d="M730 281L732.500 283.500M732.500 281V283.500H730" stroke="#333" stroke-width="0.900"/>
<!-- stretch -->
<rect x="721.500" y="293.500" width="13" height="14" stroke="#333" stroke-width="1.200" stroke-dasharray="3 1.200" fill="#fff"/>
<path d="M727.800 304V298" stroke="#8a3a82" stroke-width="1.600"/>
<path d="M724.800 300.500L727.800 297L730.800 300.500" stroke="#8a3a82" stroke-width="1.500"/>
<!-- trim -->
<path d="M731 315L725 330" stroke="#333" stroke-width="1.500"/>
<path d="M720 322.500H726M730.500 322.500H735.500" stroke="#8a3a62" stroke-width="1.200" stroke-dasharray="2 1"/>
<!-- extend -->
<path d="M734.500 337L728.500 352" stroke="#333" stroke-width="1.500"/>
<path d="M720 344.500H730" stroke="#333" stroke-width="1.200" stroke-dasharray="2 1"/>
<!-- break at point -->
<path d="M726 359.500H721.500V373.500H735V359.500H730.500" stroke="#333" stroke-width="1.300"/>
<circle cx="728.200" cy="359" r="0.900" fill="#333"/>
<!-- break -->
<path d="M723.500 383.500H721.500V395.500H735V383.500H733" stroke="#333" stroke-width="1.300"/>
<circle cx="724.800" cy="382" r="1" fill="#3a5a9a"/><circle cx="731.500" cy="382" r="1" fill="#3a5a9a"/>
<!-- join -->
<path d="M720.500 405.500H725.500M722.800 403L725.500 405.500L722.800 408M735.500 405.500H730.500M733.200 403L730.500 405.500L733.200 408" stroke="#4e9c7e" stroke-width="1.300"/>
<circle cx="728" cy="405.500" r="0.800" fill="#333"/>
<path d="M721.500 416.500V409.500H725M731 409.500H734.500V416.500" stroke="#333" stroke-width="1.200"/>
<!-- chamfer -->
<path d="M721.500 438.500H734V426.500" stroke="#333" stroke-width="1.200"/>
<path d="M721.500 437.500L733.500 426.500" stroke="#8a3a82" stroke-width="1.200"/>
<!-- fillet -->
<path d="M721.500 460.500H734V448.500" stroke="#333" stroke-width="1.200"/>
<path d="M721.500 460Q722 449 733.500 448.500" stroke="#8a3a82" stroke-width="1.200"/>
<!-- explode -->
<circle cx="726.800" cy="478" r="6.500" fill="#3c6aa8"/>
<path d="M729 472.500L731.500 469.500" stroke="#2c3c5c" stroke-width="2.200"/>
<rect x="732" y="474" width="4.500" height="6" fill="#f5c62c"/>
<rect x="733.500" y="476" width="1.500" height="2" fill="#fff"/>
<!-- last icon -->
<rect x="720.500" y="491.500" width="12" height="13" fill="#dceaf9" stroke="#3d6ab0" stroke-width="1.100"/>
<path d="M720.500 496H732.500M724.500 491.500V504.500M728.500 491.500V496M724.500 500.500H729" stroke="#3d6ab0" stroke-width="1"/>
<rect x="724" y="495.500" width="4.500" height="4.500" fill="#fff" stroke="#3d6ab0" stroke-width="1"/>
<path d="M727.500 503L732 507.500L735 504.500L730.500 500Z" fill="#3d6ab0"/>
<path d="M732.500 502L736.500 497.500" stroke="#7a3a3a" stroke-width="1.800"/>
<!-- bottom right icon -->
<path d="M720.500 548V542.500H727.500V544" stroke="#333" stroke-width="1.200"/>
<path d="M733 550.500H735.500V556.500" stroke="#333" stroke-width="1.200"/>
<rect x="722.500" y="545" width="10.500" height="10" fill="#f6c32c"/>
<!-- cmd line X & grip -->
<path d="M18.500 568.500L27 577M27 568.500L18.500 577" stroke="#7c7c7c" stroke-width="2"/>
<path d="M19.500 583V585.500H17.500M25.500 583V585.500H23.500" stroke="#b4b4b4" stroke-width="1"/>
<!-- snap -->
<rect x="302" y="600" width="13" height="14" fill="#3d68a8"/>
<rect x="300.500" y="599.500" width="11.500" height="11.500" fill="#fff" stroke="#222" stroke-width="1.300"/>
<path d="M304.300 599.500V611M308.200 599.500V611M300.500 603.300H312M300.500 607.200H312" stroke="#222" stroke-width="1.300"/>
<!-- grid -->
<rect x="324.800" y="599.600" width="15" height="14.500" fill="#fff" stroke="#111" stroke-width="1.500"/>
<path d="M329.800 600V614M334.800 600V614M325 604.400H340M325 609.200H340" stroke="#2a5ae0" stroke-width="1.500"/>
<!-- ortho -->
<path d="M348.500 599V614.300H364" stroke="#222" stroke-width="1.300"/>
<rect x="349.200" y="610" width="3.800" height="3.800" stroke="#3d6ab0" stroke-width="1" fill="#e8f0fb"/>
<!-- polar -->
<circle cx="378.200" cy="607.300" r="6" stroke="#222" stroke-width="1.300" fill="#fff"/>
<path d="M378.200 607.300H388.500" stroke="#3d6ab0" stroke-width="1.200"/>
<path d="M378.200 607.300L387.500 599.500" stroke="#222" stroke-width="1.300"/>
<!-- highlighted buttons -->
<g fill="#b9c9ee" stroke="#9d9de6" stroke-width="1">
<rect x="394.500" y="597.500" width="19" height="19"/>
<rect x="418.500" y="597.500" width="19" height="19"/>
<rect x="442.500" y="597.500" width="19" height="19"/>
<rect x="466.500" y="597.500" width="19" height="19"/>
<rect x="514.500" y="597.500" width="19" height="19"/>
<rect x="538.500" y="597.500" width="19" height="19"/>
</g>
<!-- osnap -->
<rect x="397.500" y="600.500" width="13" height="13" stroke="#222" stroke-width="1.300"/>
<rect x="396.500" y="599.500" width="3" height="3" fill="#f4b0c0" stroke="#d06a8a" stroke-width="0.800"/>
<!-- otrack -->
<path d="M421 612.500H436M421.500 611L436 600" stroke="#222" stroke-width="1.300"/>
<rect x="427" y="604" width="3.500" height="3.500" fill="#fff" stroke="#444" stroke-width="0.900"/>
<!-- ducs -->
<path d="M445.500 600V613.500H459" stroke="#222" stroke-width="1.300"/>
<path d="M443.500 602L445.500 599.500L447.500 602M457 611.500L459.500 613.500L457 615.500" stroke="#222" stroke-width="1.100"/>
<path d="M446 613L454 604.500" stroke="#444" stroke-width="1.100"/>
<circle cx="455.300" cy="603" r="2.300" fill="#f3cc5a"/>
<!-- dyn -->
<path d="M473 601.500V610.500M468.500 606H477.500" stroke="#222" stroke-width="1.400"/>
<rect x="475.500" y="609.500" width="8.500" height="3.500" stroke="#3d6ab0" stroke-width="1.100" fill="#d5e2f6"/>
<!-- lwt -->
<g fill="#222" shape-rendering="crispEdges"><rect x="493" y="602" width="14" height="1.500"/><rect x="493" y="605.500" width="14" height="2"/><rect x="493" y="609.500" width="14" height="3"/></g>
<!-- qp -->
<path d="M519.500 599.500V605M516.800 602.200H522.300" stroke="#222" stroke-width="1.200"/>
<rect x="522.500" y="603.500" width="6" height="6" stroke="#333" stroke-width="1.100" fill="#dfe8f6"/>
<rect x="525.500" y="606.500" width="6" height="6" stroke="#333" stroke-width="1.100" fill="#fff"/>
<!-- sel cycle -->
<rect x="541.500" y="599.500" width="11" height="10.500" fill="#fff" stroke="#333" stroke-width="1" stroke-dasharray="1.500 1"/>
<path d="M545.200 599.500V610M548.800 599.500V610M541.500 603H552.500M541.500 606.500H552.500" stroke="#444" stroke-width="0.900"/>
<rect x="543" y="604" width="4.500" height="4.500" fill="#3d5aa8"/>
<path d="M555.500 606V610.500H549.500" stroke="#4e9c7e" stroke-width="1.600"/>
<path d="M551.500 607.800L548.500 610.500L551.500 613.200Z" fill="#4e9c7e"/>
<!-- gear -->
<g transform="translate(689.500 605.300)">
<g fill="#3d6ab0"><rect x="-1.400" y="-7" width="2.800" height="14"/><rect x="-1.400" y="-7" width="2.800" height="14" transform="rotate(45)"/><rect x="-1.400" y="-7" width="2.800" height="14" transform="rotate(90)"/><rect x="-1.400" y="-7" width="2.800" height="14" transform="rotate(135)"/></g>
<circle r="5" fill="#3d6ab0"/><circle r="2.500" fill="#f0f0f0"/>
</g>
<!-- fullscreen -->
<g stroke="#333" stroke-width="1.100"><path d="M705.500 604V599.500H710M705.500 599.500L710.500 604.500M719.500 604V599.500H715M719.500 599.500L714.500 604.500M705.500 608.500V613H710M705.500 613L710.500 608M719.500 608.500V613H715M719.500 613L714.500 608"/></g>
<!-- resize grip -->
<g fill="#c2c2c2"><rect x="737" y="608" width="1.500" height="1.500"/><rect x="734" y="611" width="1.500" height="1.500"/><rect x="737" y="611" width="1.500" height="1.500"/><rect x="731" y="614" width="1.500" height="1.500"/><rect x="734" y="614" width="1.500" height="1.500"/><rect x="737" y="614" width="1.500" height="1.500"/></g>
<!-- window buttons glyphs -->
<rect x="652.500" y="19.500" width="10" height="3" rx="0.500" fill="#fff" stroke="#4a5a72" stroke-width="1"/>
<rect x="685.500" y="14.500" width="10" height="8" rx="0.500" fill="#fff" stroke="#4a5a72" stroke-width="1"/>
<rect x="688.500" y="17.500" width="4" height="2" fill="#b9cde6" stroke="#4a5a72" stroke-width="1"/>
<path d="M720 15L728 21.500M728 15L720 21.500" stroke="#5a302a" stroke-width="4"/>
<path d="M720 15L728 21.500M728 15L720 21.500" stroke="#fff" stroke-width="2.400"/>
<!-- mouse cursor (vertical resize) -->
<path d="M529.300 1.500L533.500 -3L537.700 1.500H534.700V14.500H537.700L533.500 19.300L529.300 14.500H532.300V1.500Z" fill="#fff" stroke="#1a2040" stroke-width="1"/>
</svg>
</div>
</body>
</html>
